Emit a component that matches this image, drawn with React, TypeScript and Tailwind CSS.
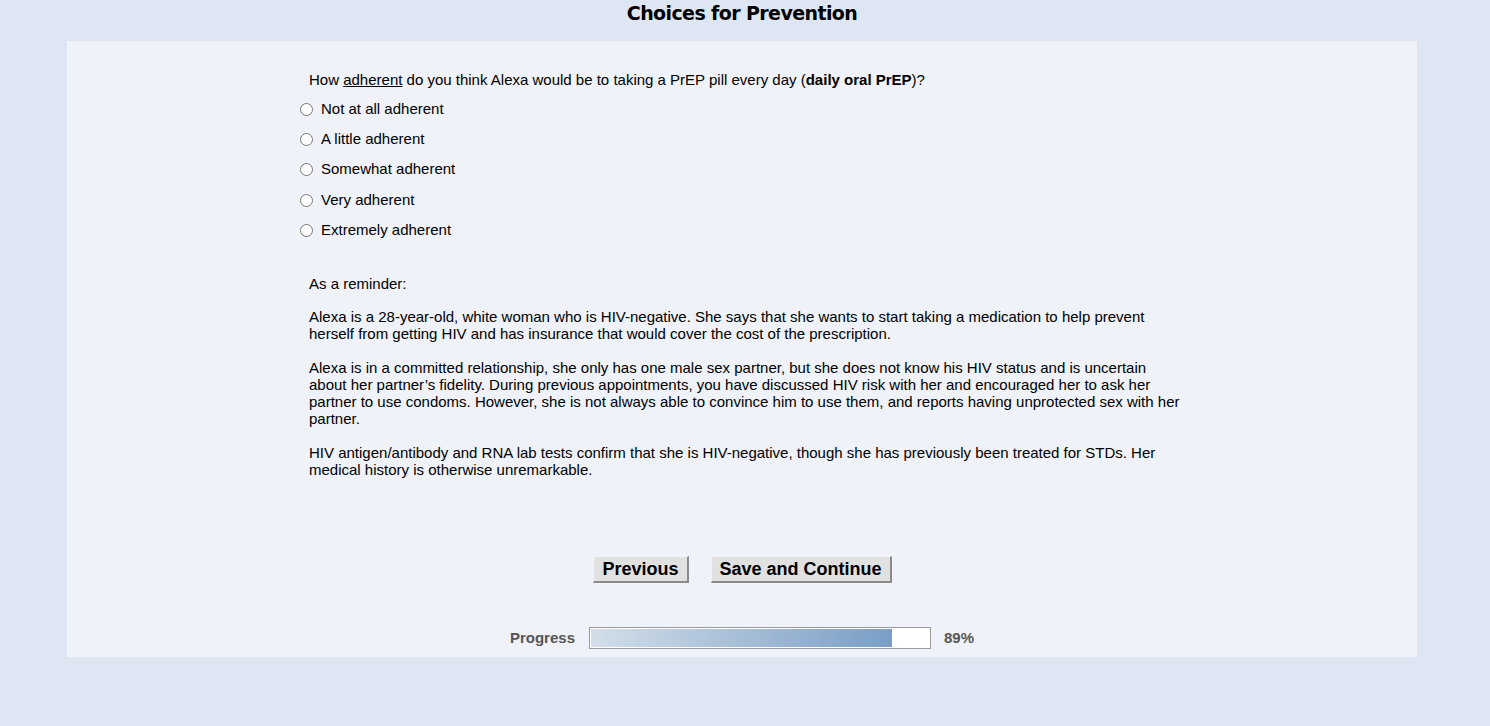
import { useState } from 'react';

const OPTIONS = [
  'Not at all adherent',
  'A little adherent',
  'Somewhat adherent',
  'Very adherent',
  'Extremely adherent',
];

const PCT = 89;

export default function App() {
  const [choice, setChoice] = useState<number | null>(null);

  return (
    <div className="min-h-[726px] bg-[#dfe6f3] text-black" style={{ fontFamily: '"Liberation Sans", Arial, sans-serif' }}>
      <div className="ml-[67px] w-[1350px]">
        <h1 className="h-[41px] pt-[1px] text-center text-[19px] leading-[24px] font-bold text-black"
          style={{ fontFamily: '"DejaVu Sans", Verdana, sans-serif', letterSpacing: '-0.6px' }}>
          Choices for Prevention
        </h1>

        <div className="bg-[#eff2f8] pt-[30px] pb-[8px]">
          <div className="w-[884px] mx-auto text-[15px] leading-[17px]">
            <p className="pl-[9px]">
              How <span className="underline">adherent</span> do you think Alexa would be to taking a PrEP pill every day (<b>daily oral PrEP</b>)?
            </p>

            <div className="mt-[5px]">
              {OPTIONS.map((o, i) => (
                <label key={o} className="flex items-center h-[30.4px] cursor-pointer">
                  <input type="radio" name="adh" checked={choice === i} onChange={() => setChoice(i)}
                    className="m-0 w-[13px] h-[13px] mt-[2px]" />
                  <span className="ml-[8px]">{o}</span>
                </label>
              ))}
            </div>

            <div className="pl-[9px] mt-[30px]">
              <p>As a reminder:</p>
              <p className="mt-[16px]">
                Alexa is a 28-year-old, white woman who is HIV-negative. She says that she wants to start taking a medication to help prevent herself from getting HIV and has insurance that would cover the cost of the prescription.
              </p>
              <p className="mt-[17px]">
                Alexa is in a committed relationship, she only has one male sex partner, but she does not know his HIV status and is uncertain about her partner’s fidelity. During previous appointments, you have discussed HIV risk with her and encouraged her to ask her partner to use condoms. However, she is not always able to convince him to use them, and reports having unprotected sex with her partner.
              </p>
              <p className="mt-[17px]">
                HIV antigen/antibody and RNA lab tests confirm that she is HIV-negative, though she has previously been treated for STDs. Her medical history is otherwise unremarkable.
              </p>
            </div>
          </div>

          <div className="flex justify-center gap-[22px] mt-[78px] pl-[1px]">
            <button className="h-[27px] px-[8px] bg-[#e1e1e1] border border-t-[#f4f4f4] border-l-[#f4f4f4] border-r-2 border-b-2 border-r-[#8a8a8a] border-b-[#8a8a8a] text-[18px] font-bold leading-none">
              Previous
            </button>
            <button className="h-[27px] px-[8px] bg-[#e1e1e1] border border-t-[#f4f4f4] border-l-[#f4f4f4] border-r-2 border-b-2 border-r-[#8a8a8a] border-b-[#8a8a8a] text-[18px] font-bold leading-none">
              Save and Continue
            </button>
          </div>

          <div className="flex items-center justify-center mt-[44px] text-[15px] font-bold text-[#555]">
            <span className="mr-[14px]">Progress</span>
            <div className="w-[342px] h-[22px] border border-[#999] bg-white p-[1px]">
              <div className="h-full bg-gradient-to-r from-[#d3dee9] to-[#7a9ec6]" style={{ width: `${PCT}%` }} />
            </div>
            <span className="ml-[13px]">{PCT}%</span>
          </div>
        </div>
      </div>
    </div>
  );
}
